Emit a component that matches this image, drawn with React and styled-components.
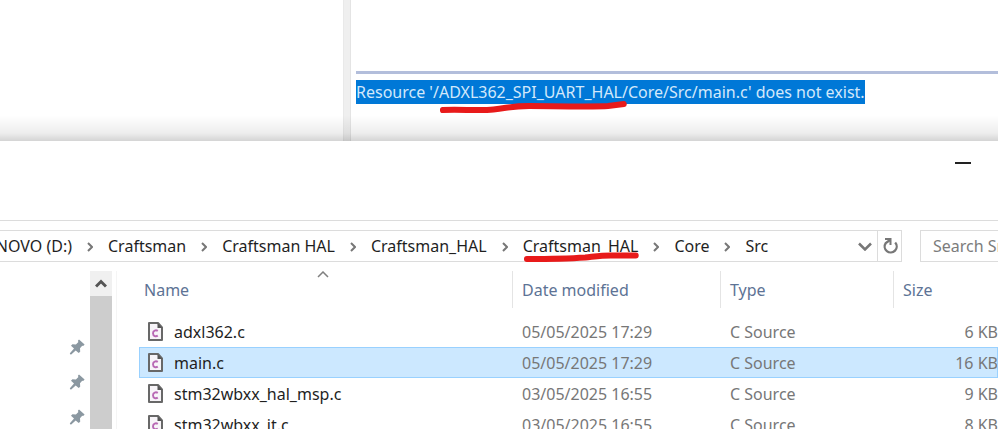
import React from "react";
import styled, { createGlobalStyle, css } from "styled-components";

const lineColor = "#dcdcdc";
const headColor = "#5d7395";
const markColor = "#e81a1a";

const GlobalStyle = createGlobalStyle`
  * {
    box-sizing: border-box;
  }

  body {
    margin: 0;
    background: #fff;
    font-family: "Noto Sans", "Open Sans", sans-serif;
    font-size: 16px;
    line-height: 24px;
    color: #1f1f1f;
  }

  button {
    display: flex;
    align-items: center;
    justify-content: center;
    padding: 0;
    border: 0;
    background: none;
    font: inherit;
    color: inherit;
  }
`;

const Screen = styled.div`
  display: flex;
  flex-direction: column;
  height: 100vh;
  overflow: hidden;
`;

// IDE behind the explorer window
const Editor = styled.section`
  position: relative;
  display: flex;
  flex: none;
  height: 141px;

  &::after {
    content: "";
    position: absolute;
    inset: auto 0 0 0;
    height: 26px;
    background: linear-gradient(
      rgba(0, 0, 0, 0),
      rgba(0, 0, 0, 0.07) 70%,
      rgba(0, 0, 0, 0.17)
    );
  }
`;

const OutlinePane = styled.div`
  width: 343px;
`;

const Sash = styled.div`
  width: 8px;
  background: #efefef;
  border-left: 1px solid #e9e9e9;
  border-right: 1px solid #e4e4e4;
`;

const ConsolePane = styled.div`
  flex: 1;
  padding: 71px 0 0 5px;
`;

const Message = styled.div`
  padding-top: 6px;
  border-top: 3px solid #b3bedb;
  white-space: nowrap;
`;

const Selected = styled.span`
  display: inline-block;
  background: #0078d7;
  color: #d3e8fb;
`;

const Marked = styled.span`
  position: relative;
`;

const MarkSvg = styled.svg`
  position: absolute;
  left: 0;
  top: 100%;
  width: 100%;
  height: 12px;
  margin-top: ${(props) => props.$lift}px;
  overflow: visible;
  fill: none;
  stroke: ${markColor};
  stroke-width: 6;
  stroke-linecap: round;
  stroke-linejoin: round;
  z-index: 1;
`;

const Explorer = styled.section`
  display: flex;
  flex: 1;
  flex-direction: column;
  min-height: 0;
  background: #fff;
`;

const TitleBar = styled.header`
  display: flex;
  flex: none;
  justify-content: flex-end;
  align-items: flex-start;
  height: 80px;
  padding-right: 12px;
  border-bottom: 1px solid ${lineColor};
`;

const WindowButton = styled.button`
  width: 46px;
  height: 44px;
`;

const AddressRow = styled.div`
  display: flex;
  flex: none;
  gap: 18px;
  padding: 9px 0;
`;

const AddressBar = styled.nav`
  display: flex;
  flex: 1;
  height: 32px;
  border: 1px solid ${lineColor};
  border-left: 0;
`;

const Crumbs = styled.ol`
  display: flex;
  flex: 1;
  align-items: center;
  margin: 0;
  padding: 0;
  list-style: none;
`;

const Crumb = styled.li`
  display: flex;
  align-items: center;
  justify-content: flex-end;
  white-space: nowrap;
  ${(props) =>
    props.$root &&
    css`
      width: 72px;
    `}
`;

const CrumbArrow = styled.svg`
  width: 6px;
  height: 10px;
  margin: 2px 15px 0;
  fill: none;
  stroke: #777;
  stroke-width: 2;
`;

const BarButton = styled.button`
  width: 24px;
  ${(props) =>
    props.$divided &&
    css`
      border-left: 1px solid ${lineColor};
    `}
`;

const SearchBox = styled.input`
  width: 78px;
  height: 32px;
  padding: 0 0 0 12px;
  border: 1px solid ${lineColor};
  border-right: 0;
  border-radius: 0;
  outline: 0;
  background: #fff;
  font: inherit;

  &::placeholder {
    color: #7c7c7c;
    opacity: 1;
  }
`;

const Body = styled.div`
  display: flex;
  flex: 1;
  min-height: 0;
`;

const QuickAccess = styled.ul`
  display: flex;
  flex-direction: column;
  gap: 19px;
  width: 90px;
  margin: 0;
  padding: 68px 5px 0 0;
  list-style: none;

  li {
    display: flex;
    justify-content: flex-end;
    height: 16px;
  }
`;

const Scrollbar = styled.div`
  width: 22px;
  background: #cdcdcd;
`;

const ScrollUp = styled.button`
  && {
    width: 22px;
    height: 25px;
    background: #f0f0f0;
  }
`;

const FilePane = styled.main`
  flex: 1;
  min-width: 0;
  margin-left: 4px;
  padding-left: 22px;
  border-left: 1px solid #f5f5f5;
`;

const FileTable = styled.table`
  width: 100%;
  table-layout: fixed;
  border-spacing: 0;
  white-space: nowrap;
`;

const HeadCell = styled.th`
  position: relative;
  width: ${(props) => props.$width};
  height: 37px;
  padding: 0 0 0 ${(props) => (props.$first ? 5 : 9)}px;
  border-right: 1px solid #e4e4e4;
  color: ${headColor};
  font-weight: 400;
  text-align: left;

  &:last-child {
    border-right: 0;
  }
`;

const SortCaret = styled.svg`
  position: absolute;
  top: 0;
  left: 50%;
  margin-left: -9px;
  fill: none;
  stroke: #808080;
`;

const FileRow = styled.tr`
  ${(props) =>
    props.$selected &&
    css`
      background: #cce8ff;
      outline: 1px solid #99d1ff;
      outline-offset: -1px;
    `}
`;

const Cell = styled.td`
  height: 31px;
  padding: 0 0 0 9px;
  color: #777;
  text-align: ${(props) => (props.$right ? "right" : "left")};
`;

const FileName = styled.div`
  display: flex;
  align-items: center;
  gap: 11px;
  color: #1f1f1f;
`;

const Spacer = styled.tr`
  height: 8px;
`;

const PinIcon = () => (
  <svg width="16" height="16" viewBox="0 0 16 16" fill="#8b98a1">
    <path d="M10 .5l5.600 5-1.400 1.400-1-.1-2.200 2.500.2 3.400-1.500 1.400-3-2.700-4.500 4-1.200-.1-.1-1.100L5 9.500 2 6.700l1.400-1.500 3.500.2L9.400 3l-.5-1.200z" />
  </svg>
);

const FileIcon = () => (
  <svg width="15" height="19" viewBox="0 0 15 19" fill="none">
    <path
      d="M1 1h9l4 4.500v12.500H1z"
      fill="#f7f4f8"
      stroke="#686868"
      strokeWidth="2"
      strokeLinejoin="round"
    />
    <path d="M9.500 1v5H14z" fill="#555" />
    <path
      d="M9.800 8.900C8 7.700 5 8.300 5 11.300s3 3.500 4.800 2.300"
      stroke="#b868b4"
      strokeWidth="1.900"
    />
  </svg>
);

const ArrowIcon = () => (
  <CrumbArrow viewBox="0 0 6 10">
    <path d="M1 1l4 4-4 4" />
  </CrumbArrow>
);

const CRUMBS = [
  { label: "NOVO (D:)" },
  { label: "Craftsman" },
  { label: "Craftsman HAL" },
  { label: "Craftsman_HAL" },
  { label: "Craftsman_HAL", marked: true },
  { label: "Core" },
  { label: "Src" },
];

const FILES = [
  { name: "adxl362.c", date: "05/05/2025 17:29", size: "6 KB" },
  { name: "main.c", date: "05/05/2025 17:29", size: "16 KB", selected: true },
  { name: "stm32wbxx_hal_msp.c", date: "03/05/2025 16:55", size: "9 KB" },
  { name: "stm32wbxx_it.c", date: "03/05/2025 16:55", size: "8 KB" },
];

const App = () => {
  return (
    <Screen>
      <GlobalStyle />

      <Editor>
        <OutlinePane />
        <Sash />
        <ConsolePane>
          <Message>
            <Selected>
              Resource '/
              <Marked>
                ADXL362_SPI_UART_HAL
                <MarkSvg
                  viewBox="0 0 195 12"
                  preserveAspectRatio="none"
                  $lift={-1}
                >
                  <path d="M4 8C22 7 42 9 58 7.500S76 4 96 4s70 1 84 0l17-2" />
                </MarkSvg>
              </Marked>
              /Core/Src/main.c' does not exist.
            </Selected>
          </Message>
        </ConsolePane>
      </Editor>

      <Explorer>
        <TitleBar>
          <WindowButton aria-label="Minimize">
            <svg width="16" height="2">
              <path d="M0 1h16" stroke="#222" strokeWidth="2" />
            </svg>
          </WindowButton>
        </TitleBar>

        <AddressRow>
          <AddressBar>
            <Crumbs>
              {CRUMBS.map((crumb, i) => (
                <React.Fragment key={i}>
                  {i > 0 && (
                    <li>
                      <ArrowIcon />
                    </li>
                  )}
                  <Crumb $root={i === 0}>
                    {crumb.marked ? (
                      <Marked>
                        {crumb.label}
                        <MarkSvg
                          viewBox="0 0 119 12"
                          preserveAspectRatio="none"
                          $lift={-4}
                        >
                          <path d="M4 5c18 0 38 0 60-1.500C78 2 84 1 94 1.500h22" />
                        </MarkSvg>
                      </Marked>
                    ) : (
                      crumb.label
                    )}
                  </Crumb>
                </React.Fragment>
              ))}
            </Crumbs>
            <BarButton aria-label="Previous locations">
              <svg width="14" height="9" fill="none" stroke="#777">
                <path d="M1 1.500l6 6 6-6" strokeWidth="2.500" />
              </svg>
            </BarButton>
            <BarButton $divided aria-label="Refresh">
              <svg width="16" height="18" fill="none" stroke="#777">
                <path
                  d="M13.200 5.500A6 6 0 1 1 3.800 6L8 3"
                  strokeWidth="2.300"
                />
                <path d="M3 2h5.500v6" strokeWidth="2" />
              </svg>
            </BarButton>
          </AddressBar>
          <SearchBox aria-label="Search Src" placeholder="Search Src" />
        </AddressRow>

        <Body>
          <QuickAccess>
            <li>
              <PinIcon />
            </li>
            <li>
              <PinIcon />
            </li>
            <li>
              <PinIcon />
            </li>
          </QuickAccess>
          <Scrollbar>
            <ScrollUp aria-label="Scroll up">
              <svg width="12" height="9" fill="none" stroke="#555">
                <path d="M1 7.500l5-5 5 5" strokeWidth="3" />
              </svg>
            </ScrollUp>
          </Scrollbar>

          <FilePane>
            <FileTable>
              <thead>
                <tr>
                  <HeadCell $first $width="374px">
                    Name
                    <SortCaret width="12" height="7">
                      <path d="M1 6l5-5 5 5" strokeWidth="1.500" />
                    </SortCaret>
                  </HeadCell>
                  <HeadCell $width="208px">Date modified</HeadCell>
                  <HeadCell $width="173px">Type</HeadCell>
                  <HeadCell>Size</HeadCell>
                </tr>
              </thead>
              <tbody>
                <Spacer />
                {FILES.map((file) => (
                  <FileRow key={file.name} $selected={file.selected}>
                    <Cell>
                      <FileName>
                        <FileIcon />
                        {file.name}
                      </FileName>
                    </Cell>
                    <Cell>{file.date}</Cell>
                    <Cell>C Source</Cell>
                    <Cell $right>{file.size}</Cell>
                  </FileRow>
                ))}
              </tbody>
            </FileTable>
          </FilePane>
        </Body>
      </Explorer>
    </Screen>
  );
};

export default App;
